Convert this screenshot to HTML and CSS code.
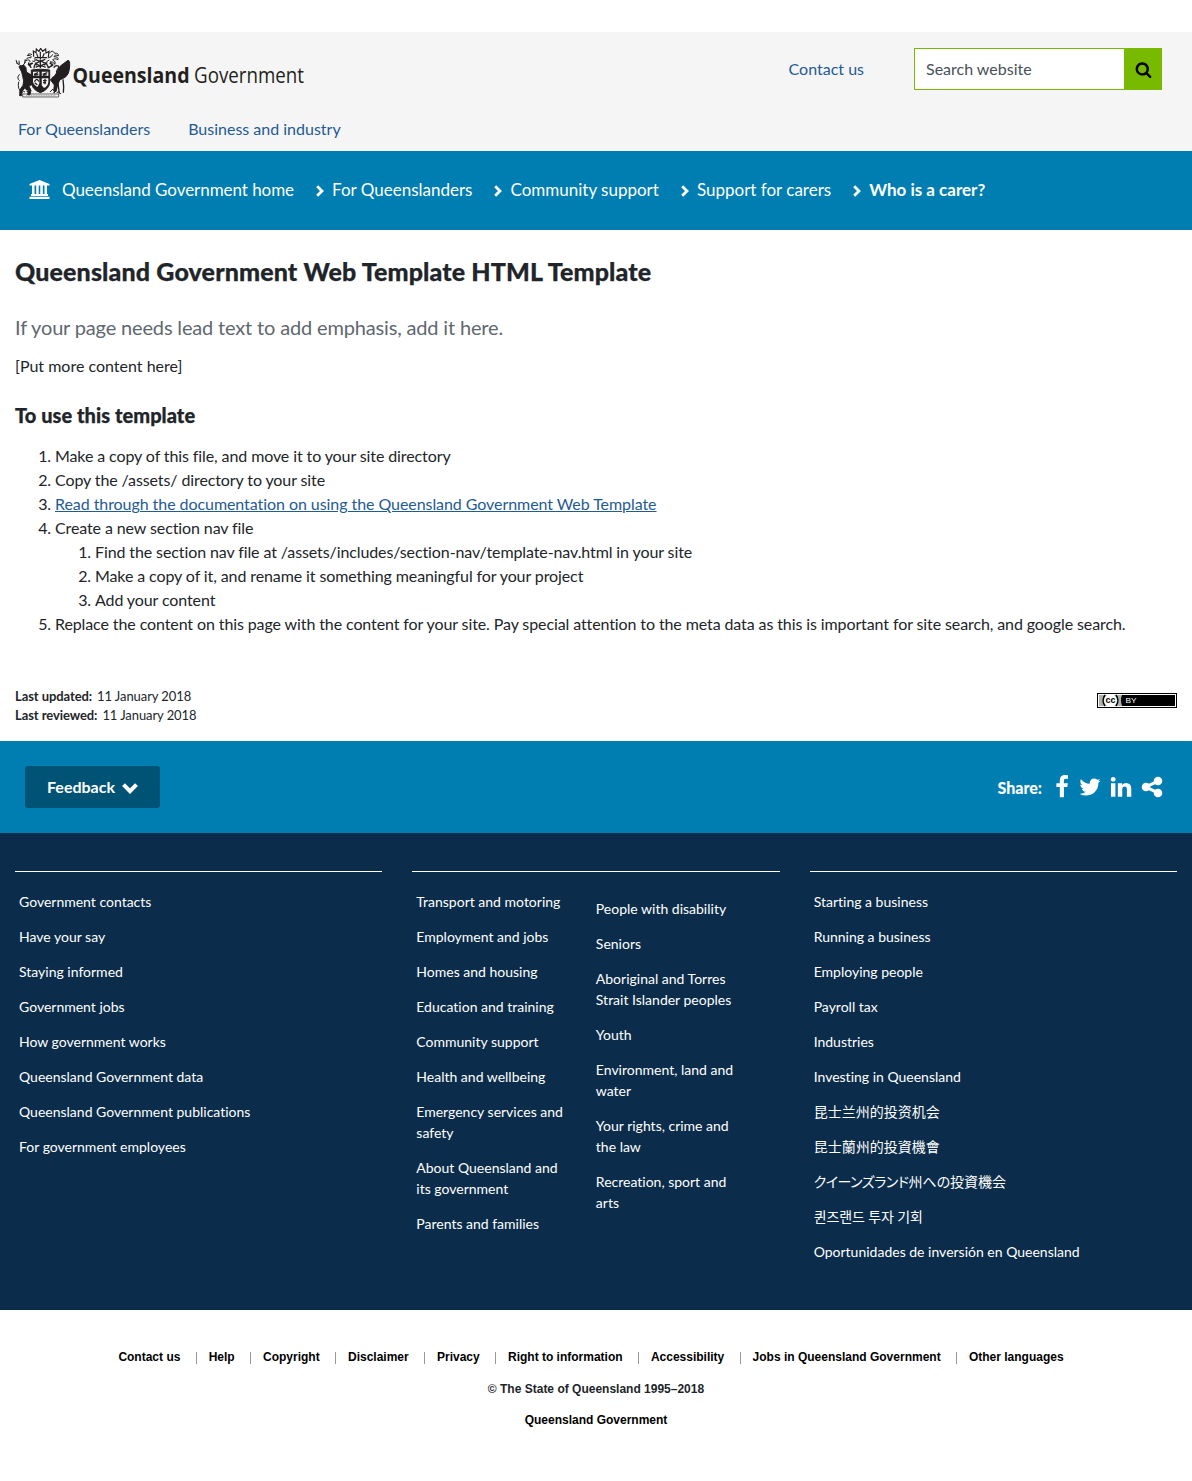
FILE: index.html
```html
<!DOCTYPE html>
<html lang="en">
<head>
<meta charset="utf-8">
<title>Queensland Government Web Template HTML Template</title>
<link rel="stylesheet" href="styles.css">
</head>
<body>
<header class="site-header">
  <div class="header-top">
    <a class="brand" href="#">
      <svg width="360" height="50" viewBox="0 0 360 50" role="img" aria-label="Queensland Government">
        <g transform="translate(-5,-6) scale(.33333)" fill="none" stroke="#231f20" stroke-width="3">
          <path d="M38 156h108v9H38z" stroke-width="2"/>
          <path d="M48 161h88" stroke-width="2" stroke-dasharray="3 2" opacity=".55"/>
          <path d="M27 74l14-5 7 8 1 13 17 10 1 26-10 7 6 12-3 13h-7l2-12-11-7-8 9-1 13h-6l1-18 9-13 2-13-3-14-3-13z" fill="#231f20" stroke-width="3"/>
          <path d="M34 72q-17-6-16-18m7 10-6-1m19 9q9-8 7-19m-2 9 5-2M28 66l-1-10m-1 63q-5 25 12 33M29 116q-11-8 0-19"/>
          <path d="M174 55q6 0 5 17-1 25-14 34l-16 8-6 15-5 20-7-2 2-18-12-16 11-8 12-19 7-14z" fill="#231f20" stroke-width="3"/>
          <path d="M149 96q-13-2-8-11 8-7 4-13-8-4-14 5m-5 32q14-12 23-10m-8 28-9 27m12-30 4 31M159 112l2 22-1 18" stroke-width="4"/>
          <path d="M64 84q27-5 55 0v35q0 23-28 33-27-10-27-33z" fill="#231f20"/>
          <path d="M69 89h19v12H69zm26 0h20v12H95zM69 109h19v15q-3 8-6 11-12-7-13-16zm26 0h20v11q-1 12-13 18l-7-8z" fill="#f5f5f5" stroke="none"/>
          <path d="M72 97l12-5m-11 8 12-3m13 0 14-5m-13 8 11-2M73 119q9-14 13 0m-12 3 8 6m17-12 11 0m-5-6v17m-6-5 9 0M92 86v62M65 105h53" stroke-width="4"/>
          <path d="M72 79q1-15 12-18l8-5 8 5q14 4 15 18M77 76q14-9 30 0M82 67l8 6 12-7M91 57v21M80 70l-4-8M103 70l5-9M64 77l-8-9 12-4m48 13 12-8-9-6" stroke-width="4"/>
          <path d="M71 44l-1-17 8 5 1-11 8 7 5-9 6 9 9-7 1 12 9-5-2 17M74 47h37M80 35l4 11m19-12-5 12M91 29v24M77 53l13 5 16-6" stroke-width="3.500"/>
          <path d="M66 38q-11-6-14 3 13-3 11 6-16-1-16 10 12-7 13 1-6 3-5 11 9-9 14-5-10 1-7 13M118 34q9-13 16 0 12-2 11 8-10-6-13 2 14 0 12 9-12-6-16 1 11 4 7 13-7-10-15-7 10 2 5 14M113 48q13-2 15-11M67 57q12 5 7-8m44 5q-11 3-8 12"/>
          <path d="M33 153q2-9 12-3m96 3q3-8 12 3M54 137l8 10m58 3 9-9M49 147l10 5"/>
        </g>
        <text class="logo-bold" x="57.500" y="34.500" textLength="117" lengthAdjust="spacingAndGlyphs">Queensland</text>
        <text class="logo-light" x="179" y="34.500" textLength="110" lengthAdjust="spacingAndGlyphs">Government</text>
      </svg>
    </a>
    <div class="header-tools">
      <a class="contact" href="#">Contact us</a>
      <form class="search">
        <input class="search-field" type="text" placeholder="Search website" aria-label="Search website">
        <button class="search-button" type="button" aria-label="Search">
          <svg width="17" height="17" viewBox="0 0 1792 1792"><path d="M1216 832q0-185-131.500-316.500t-316.500-131.500-316.500 131.500-131.500 316.500 131.500 316.500 316.500 131.500 316.500-131.500 131.500-316.500zm512 832q0 52-38 90t-90 38q-54 0-90-38l-343-342q-179 124-399 124-143 0-273.500-55.500t-225-150-150-225-55.500-273.500 55.500-273.500 150-225 225-150 273.500-55.500 273.500 55.500 225 150 150 225 55.500 273.500q0 220-124 399l343 343q37 37 37 90z"/></svg>
        </button>
      </form>
    </div>
  </div>
  <nav class="site-nav"><a href="#">For Queenslanders</a><a href="#">Business and industry</a></nav>
</header>

<nav class="breadcrumb">
  <svg class="bank" width="21" height="19" viewBox="0 0 21 19" fill="#fff"><path d="M10.500 0 20.500 4v1.500H.5V4zM3 5h2.500v9H3zm4.200 0h2.500v9H7.200zm4.100 0h2.500v9h-2.500zm4.200 0H18v9h-2.500zM2 14h17v2H2zM.5 16.800h20V19H.5z"/></svg>
  <a class="crumb-home" href="#">Queensland Government home</a>
  <span class="crumb"><svg width="8" height="12" viewBox="0 0 8 12"><path d="M1.200 1.200 6 6l-4.800 4.800"/></svg><a href="#">For Queenslanders</a></span>
  <span class="crumb"><svg width="8" height="12" viewBox="0 0 8 12"><path d="M1.200 1.200 6 6l-4.800 4.800"/></svg><a href="#">Community support</a></span>
  <span class="crumb"><svg width="8" height="12" viewBox="0 0 8 12"><path d="M1.200 1.200 6 6l-4.800 4.800"/></svg><a href="#">Support for carers</a></span>
  <span class="crumb current"><svg width="8" height="12" viewBox="0 0 8 12"><path d="M1.200 1.200 6 6l-4.800 4.800"/></svg><b>Who is a carer?</b></span>
</nav>

<main class="content">
  <h1>Queensland Government Web Template HTML Template</h1>
  <p class="lead">If your page needs lead text to add emphasis, add it here.</p>
  <p class="body-text">[Put more content here]</p>
  <h2>To use this template</h2>
  <ol class="steps">
    <li>Make a copy of this file, and move it to your site directory</li>
    <li>Copy the /assets/ directory to your site</li>
    <li><a href="#">Read through the documentation on using the Queensland Government Web Template</a></li>
    <li>Create a new section nav file
      <ol class="steps">
        <li>Find the section nav file at /assets/includes/section-nav/template-nav.html in your site</li>
        <li>Make a copy of it, and rename it something meaningful for your project</li>
        <li>Add your content</li>
      </ol>
    </li>
    <li>Replace the content on this page with the content for your site. Pay special attention to the meta data as this is important for site search, and google search.</li>
  </ol>
  <div class="page-meta">
    <dl class="dates">
      <div><dt>Last updated:</dt><dd>11 January 2018</dd></div>
      <div><dt>Last reviewed:</dt><dd>11 January 2018</dd></div>
    </dl>
    <svg class="licence" width="80" height="15" viewBox="0 0 80 15">
      <path d="M0 0h80v15H0z"/><path d="M1 1h78v13H1z" fill="#fff"/><path d="M2 2h76v11H2z"/>
      <path d="M2 2h23q-2 5 0 11H2z" fill="#abb5aa"/>
      <circle cx="13.500" cy="7.500" r="6.500" fill="#fff"/>
      <path d="M8 2q-4 5.500 0 11M19 2q4 5.500 0 11" fill="none" stroke="#000" stroke-width="1.500"/>
      <text class="cc" x="8.500" y="10" textLength="10" lengthAdjust="spacingAndGlyphs">cc</text>
      <text class="by" x="28.500" y="10" textLength="11" lengthAdjust="spacingAndGlyphs">BY</text>
    </svg>
  </div>
</main>

<section class="actions">
  <button class="feedback" type="button">Feedback <svg width="16" height="11" viewBox="0 0 16 11"><path d="M1.500 1.700 8 8.200l6.500-6.500"/></svg></button>
  <div class="share">
    <span class="share-label">Share:</span>
    <svg class="facebook" width="24" height="24" viewBox="0 0 1792 1792"><path d="M1343 12v264h-157q-86 0-116 36t-30 108v189h293l-39 296h-254v759h-306v-759h-255v-296h255v-218q0-186 104-288.500t277-102.500q147 0 228 12z"/></svg>
    <svg class="twitter" width="24" height="24" viewBox="0 0 1792 1792"><path d="M1684 408q-67 98-162 167 1 14 1 42 0 130-38 259.500t-115.500 248.500-184.500 210.500-258 146-323 54.500q-271 0-496-145 35 4 78 4 225 0 401-138-105-2-188-64.500t-114-159.500q33 5 61 5 43 0 85-11-112-23-185.500-111.500t-73.500-205.500v-4q68 38 146 41-66-44-105-115t-39-154q0-88 44-163 121 149 294.500 238.500t371.500 99.500q-8-38-8-74 0-134 94.500-228.500t228.500-94.500q140 0 236 102 109-21 205-78-37 115-142 178 93-10 186-50z"/></svg>
    <svg class="linkedin" width="24" height="24" viewBox="0 0 1792 1792"><path d="M477 625v991h-330v-991h330zm21-306q1 73-50.500 122t-135.500 49h-2q-82 0-132-49t-50-122q0-74 51.500-122.500t134.500-48.500 133 48.500 51 122.500zm1166 729v568h-329v-530q0-105-40.500-164.500t-126.500-59.500q-63 0-105.500 34.500t-63.500 85.500q-11 30-11 81v553h-329q2-399 2-647t-1-296l-1-48h329v144h-2q20-32 41-56t56.500-52 87-43.500 114.500-15.500q171 0 275 113.500t104 332.500z"/></svg>
    <svg class="share-alt" width="24" height="24" viewBox="0 0 1792 1792"><path d="M1344 1024q133 0 226.500 93.500t93.500 226.500-93.500 226.500-226.500 93.500-226.500-93.500-93.500-226.500q0-12 2-34l-360-180q-92 86-218 86-133 0-226.500-93.500t-93.500-226.500 93.500-226.500 226.500-93.500q126 0 218 86l360-180q-2-22-2-34 0-133 93.500-226.500t226.500-93.500 226.500 93.500 93.500 226.500-93.500 226.500-226.500 93.500q-126 0-218-86l-360 180q2 22 2 34t-2 34l360 180q92-86 218-86z"/></svg>
  </div>
</section>

<footer>
  <div class="fat-footer">
    <ul class="link-list">
      <li><a href="#">Government contacts</a></li>
      <li><a href="#">Have your say</a></li>
      <li><a href="#">Staying informed</a></li>
      <li><a href="#">Government jobs</a></li>
      <li><a href="#">How government works</a></li>
      <li><a href="#">Queensland Government data</a></li>
      <li><a href="#">Queensland Government publications</a></li>
      <li><a href="#">For government employees</a></li>
    </ul>
    <div class="link-pair">
      <ul class="link-column">
        <li><a href="#">Transport and motoring</a></li>
        <li><a href="#">Employment and jobs</a></li>
        <li><a href="#">Homes and housing</a></li>
        <li><a href="#">Education and training</a></li>
        <li><a href="#">Community support</a></li>
        <li><a href="#">Health and wellbeing</a></li>
        <li><a href="#">Emergency services and safety</a></li>
        <li><a href="#">About Queensland and its government</a></li>
        <li><a href="#">Parents and families</a></li>
      </ul>
      <ul class="link-column second">
        <li><a href="#">People with disability</a></li>
        <li><a href="#">Seniors</a></li>
        <li><a href="#">Aboriginal and Torres Strait Islander peoples</a></li>
        <li><a href="#">Youth</a></li>
        <li><a href="#">Environment, land and water</a></li>
        <li><a href="#">Your rights, crime and the law</a></li>
        <li><a href="#">Recreation, sport and arts</a></li>
      </ul>
    </div>
    <ul class="link-list">
      <li><a href="#">Starting a business</a></li>
      <li><a href="#">Running a business</a></li>
      <li><a href="#">Employing people</a></li>
      <li><a href="#">Payroll tax</a></li>
      <li><a href="#">Industries</a></li>
      <li><a href="#">Investing in Queensland</a></li>
      <li lang="zh-Hans"><a href="#">昆士兰州的投资机会</a></li>
      <li lang="zh-Hant"><a href="#">昆士蘭州的投資機會</a></li>
      <li lang="ja"><a href="#"><span class="kana">クイーンズランド</span>州への投資機会</a></li>
      <li lang="ko"><a href="#">퀸즈랜드 투자 기회</a></li>
      <li><a href="#">Oportunidades de inversión en Queensland</a></li>
    </ul>
  </div>
  <div class="legal">
    <ul class="legal-links">
      <li><a href="#">Contact us</a></li>
      <li><a href="#">Help</a></li>
      <li><a href="#">Copyright</a></li>
      <li><a href="#">Disclaimer</a></li>
      <li><a href="#">Privacy</a></li>
      <li><a href="#">Right to information</a></li>
      <li><a href="#">Accessibility</a></li>
      <li><a href="#">Jobs in Queensland Government</a></li>
      <li><a href="#">Other languages</a></li>
    </ul>
    <p class="copyright">© The State of Queensland 1995–2018</p>
    <p class="owner"><a href="#">Queensland Government</a></p>
  </div>
</footer>
</body>
</html>
```
FILE: styles.css
```css
* { box-sizing: border-box; }
body { margin: 0; padding-top: 32px; background: #fff; color: #212529; font: 16px/24px Lato, "Noto Sans CJK JP", sans-serif; font-variant-ligatures: none; }
ul, ol, dl, dd, p, h1, h2 { margin: 0; padding: 0; }
ul { list-style: none; }
a { color: inherit; text-decoration: none; }
svg { display: block; flex: none; }

.site-header { height: 119px; padding: 16px 30px 0 15px; background: #f5f5f5; color: #1f5b94; }
.header-top { display: flex; justify-content: space-between; height: 69px; }
.logo-bold { font: 700 22px "Open Sans", sans-serif; fill: #231f20; }
.logo-light { font: 400 22px "Open Sans", sans-serif; fill: #231f20; }
.header-tools { display: flex; align-items: flex-start; gap: 50px; }
.contact { padding-top: 9px; }
.search { display: flex; width: 248px; height: 42px; }
.search-field { flex: 1; min-width: 0; padding: 0 11px; border: 1px solid #78ba00; border-right: 0; border-radius: 0; background: #fff; font: inherit; }
.search-field::placeholder { color: #495057; opacity: 1; }
.search-button { display: flex; align-items: center; justify-content: center; width: 38px; padding: 0; border: 0; background: #78ba00; }
.site-nav { display: flex; gap: 38px; padding-left: 3px; }

.breadcrumb { display: flex; align-items: center; height: 79px; padding: 0 0 2px 29px; background: #007eb1; color: #fff; font-size: 17px; }
.crumb-home { margin-left: 12px; letter-spacing: -.05px; }
.crumb { display: flex; align-items: center; gap: 8px; margin-left: 22px; }
.crumb svg { margin-top: 3px; }
.crumb path { fill: none; stroke: #fff; stroke-width: 2.800; }

.content { height: 511px; padding: 25px 15px 0; }
h1, h2 { font-weight: 900; -webkit-text-stroke: .25px #212529; }
h1 { font-size: 25px; line-height: 32px; letter-spacing: .13px; }
.lead { margin-top: 25px; color: #60686f; font-size: 20px; line-height: 30px; letter-spacing: -.16px; }
.body-text { margin-top: 12px; }
h2 { margin-top: 25px; font-size: 20px; line-height: 24px; letter-spacing: .05px; }
.steps { padding-left: 40px; letter-spacing: -.105px; }
h2 + .steps { margin-top: 17px; }
.steps a { color: #1f5b94; text-decoration: underline; letter-spacing: -.065px; }
.page-meta { display: flex; justify-content: space-between; margin-top: 51px; font-size: 13px; line-height: 19px; letter-spacing: -.08px; }
.dates div { display: flex; gap: 5px; }
.dates dt { font-weight: 700; }
.licence { margin-top: 6px; letter-spacing: 0; }
.cc { font: 700 8.500px "Liberation Sans", sans-serif; }
.by { font: 400 7px "Liberation Sans", sans-serif; fill: #fff; }

.actions { display: flex; justify-content: space-between; height: 92px; padding: 25px 28px 25px 25px; background: #007eb1; color: #fff; }
.feedback { display: flex; align-items: center; justify-content: center; gap: 7px; width: 135px; height: 42px; padding: 0; border: 0; border-radius: 3px; background: #005375; color: #fff; font: 700 16px/24px Lato, sans-serif; }
.feedback svg { margin-top: 2px; }
.feedback path { fill: none; stroke: #fff; stroke-width: 4; }
.share { display: flex; align-items: center; height: 42px; }
.share svg { fill: #fff; }
.share-label { margin: 2px 8px 0 0; font-weight: 900; }
.twitter { margin-left: 4px; }
.linkedin { margin-left: 7px; }
.share-alt { margin-left: 7px; }

.fat-footer { display: grid; grid-template-columns: repeat(3, 1fr); gap: 30px; height: 477px; padding: 38px 15px 0; align-items: start; background: #0b2d4b; color: #fff; font-size: 14px; line-height: 21px; }
.link-list, .link-pair { border-top: 1px solid #fff; padding: 19px 4px 0; }
.fat-footer li { margin-bottom: 14px; }
.link-pair { display: grid; grid-template-columns: 149.500px 150px; gap: 30px; }
.second { padding-top: 7px; }
[lang="zh-Hans"] { font-family: Lato, "Noto Sans CJK SC", sans-serif; }
[lang="zh-Hant"] { font-family: Lato, "Noto Sans CJK TC", sans-serif; }
[lang="ja"] { font-feature-settings: "palt"; }
.kana { letter-spacing: -.5px; }
[lang="ko"] { font-family: Lato, "Noto Sans CJK KR", sans-serif; letter-spacing: -.12px; }

.legal { height: 171px; padding-top: 39px; color: #212529; text-align: center; font: 700 12px/16px "Liberation Sans", Arial, sans-serif; }
.legal a { color: #000; }
.legal-links { display: flex; justify-content: center; padding-right: 10px; }
.legal-links li { display: flex; }
.legal-links li + li::before { content: ""; width: 1px; height: 12px; margin: 3px 12px 0 15.300px; background: #999; }
.copyright { margin-top: 16px; }
.owner { margin-top: 15px; }
```
